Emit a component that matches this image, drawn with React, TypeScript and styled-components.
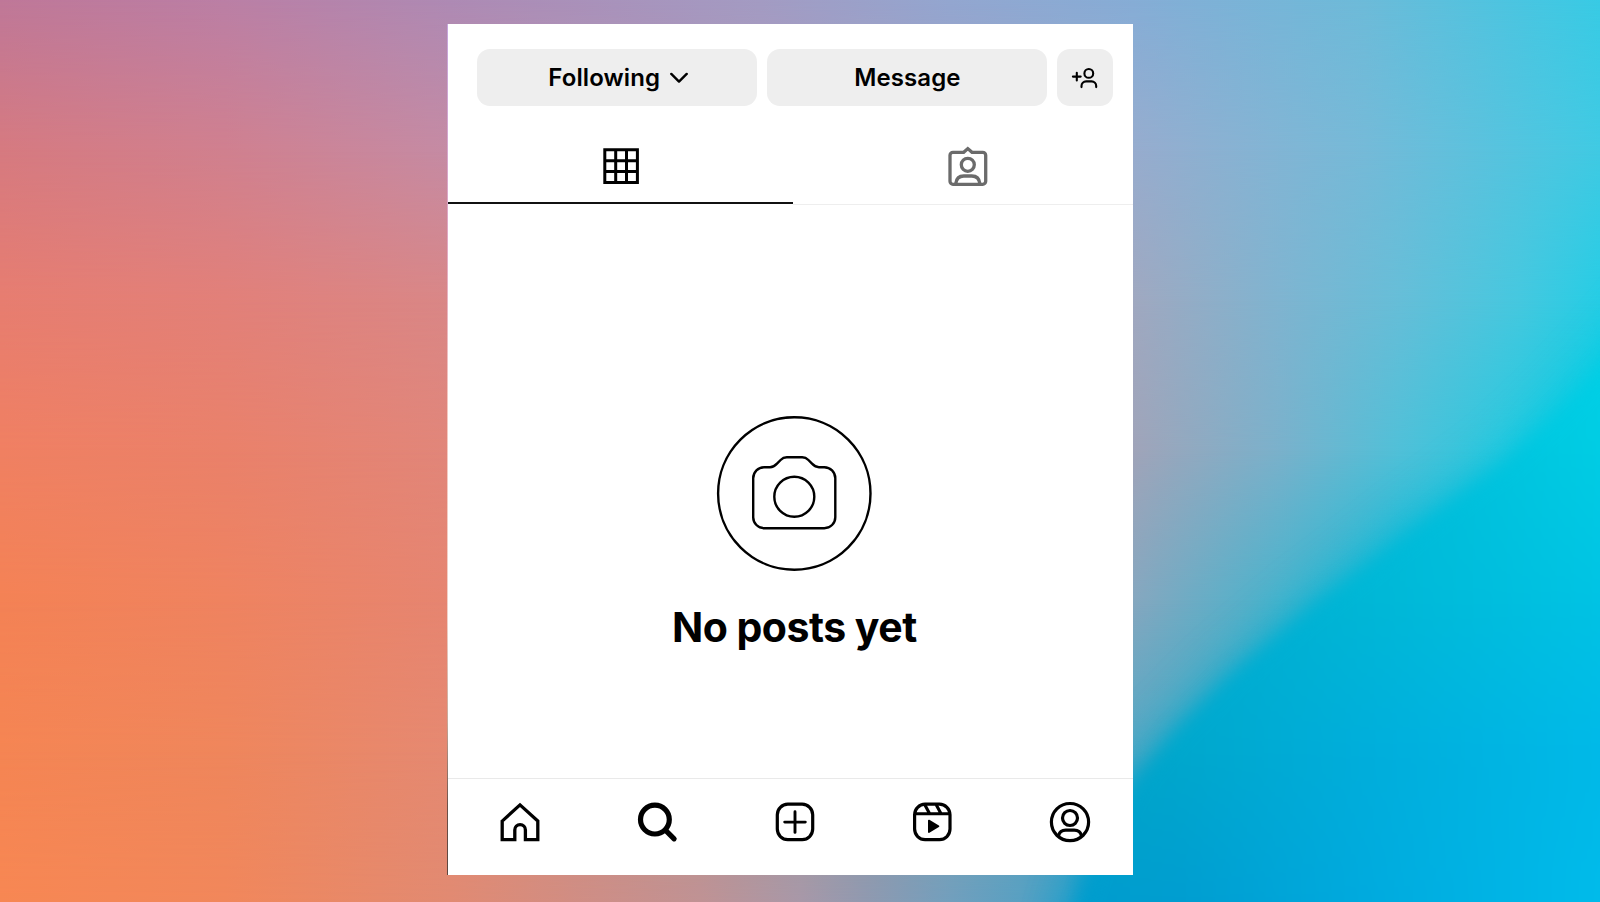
import React from 'react';
import styled, {createGlobalStyle, css} from "styled-components";

type MeshRowType = {
    from: number
    to: number
    colors: string
}

const meshRows: MeshRowType[] = [
    {
        from: 0, to: 0,
        colors: '#bf7898 0, #bb7fa5 225px, #ae8ab4 450px, #a39bc3 760px, #93a6d0 950px, #86add6 1133px, #6dbbd9 1365px, #38cbe5 1600px'
    },
    {
        from: 0, to: 150,
        colors: '#d67a80 0, #d0808f 225px, #c58ba4 450px, #97acce 1133px, #75bad8 1365px, #40cae3 1600px'
    },
    {
        from: 150, to: 300,
        colors: '#e77d70 0, #e28079 225px, #d98787 450px, #a0a8c0 1133px, #7fb4d0 1280px, #66bed8 1400px, #45c8df 1520px, #26cde5 1600px'
    },
    {
        from: 300, to: 450,
        colors: '#f08062 0, #ea816a 225px, #e1867a 450px, #a0a4b9 1133px, #7ab1cb 1280px, #50c0d8 1400px, #2cc8de 1500px, #00cce2 1600px'
    },
    {
        from: 450, to: 600,
        colors: '#f48255 0, #ef8360 225px, #e68571 450px, #86a7bf 1133px, #48b3cc 1280px, #10b9d5 1400px, #00c3e0 1600px'
    },
    {
        from: 600, to: 750,
        colors: '#f58553 0, #ef865c 225px, #e58972 450px, #54a8c4 1133px, #20adc8 1280px, #00bcd5 1600px'
    },
    {
        from: 750, to: 902,
        colors: '#f78753 0, #f1875b 225px, #e18a72 450px, #cd8e87 600px, #c09294 700px, #a898a8 800px, #9099b0 866px, #729fbd 950px, #58a0c2 1020px, #38a0c8 1065px, #009dce 1100px'
    },
]

const waveRows: MeshRowType[] = [
    {from: 0, to: 0, colors: '#00b0cc 1133px, #00bcd8 1365px, #00d0e6 1600px'},
    {from: 300, to: 450, colors: '#00a8cc 1133px, #00b9d6 1365px, #00cde4 1600px'},
    {from: 450, to: 600, colors: '#00a8cc 1133px, #00b7d6 1365px, #00c3e4 1600px'},
    {from: 600, to: 750, colors: '#00a6c9 1133px, #00aedb 1365px, #00b9e8 1600px'},
    {from: 750, to: 902, colors: '#009ccd 1080px, #009dd0 1180px, #00aade 1365px, #00bbea 1600px'},
]

const navIcons = [
    {
        id: 'home',
        icon: <path d="M3.2 20.1 21 3.9l17.8 16.2v18.6H26.4V29a5.3 5.3 0 0 0-10.6 0v9.7H3.2Z" strokeWidth="3.3"/>
    },
    {
        id: 'search',
        icon: <g strokeWidth="5.2"><circle cx="18.9" cy="18.6" r="14.4"/><path d="m29.4 29.1 8.7 8.7"/></g>
    },
    {
        id: 'create',
        icon: <><rect x="3.3" y="3.2" width="35.4" height="35.4" rx="10.5"/><path d="M21 10.8v20.6M10.7 21.1h20.6" strokeWidth="2.9"/></>
    },
    {
        id: 'reels',
        icon: <>
            <rect x="3.6" y="3.2" width="35.4" height="35.4" rx="10.5"/>
            <path d="M3.9 12.7h34.8M13.8 3.8l4.6 8.4M25.2 3.8l4.6 8.4" strokeLinecap="butt" strokeWidth="3.1"/>
            <path d="m17.9 19.6 9.5 5.7-9.5 5.7Z" fill="currentColor" strokeWidth="1.8" strokeLinejoin="round"/>
        </>
    },
    {
        id: 'profile',
        icon: <>
            <circle cx="21" cy="21.1" r="18.6"/>
            <circle cx="21" cy="17" r="7.5"/>
            <path d="M9.6 34.6c.8-3.5 3.6-5.4 7.2-5.4h8.4c3.6 0 6.4 1.9 7.2 5.4"/>
        </>
    },
]

const App = () => {
    return (
        <>
            <GlobalStyle/>
            <Page>
                <Backdrop>
                    {meshRows.map(el => <MeshRow key={el.to} {...el}/>)}
                    <WaveGlow blurSize={24}>
                        <Wave>{waveRows.map(el => <MeshRow key={el.to} {...el}/>)}</Wave>
                    </WaveGlow>
                    <WaveGlow blurSize={9}>
                        <Wave>{waveRows.map(el => <MeshRow key={el.to} {...el}/>)}</Wave>
                    </WaveGlow>
                </Backdrop>
                <Phone>
                    <Edge/>
                    <Card>
                        <Actions>
                            <ActionButton>
                                Following
                                <Chevron viewBox="0 0 18 11">
                                    <path d="m1.3 1.9 7.7 7.7 7.7-7.7"/>
                                </Chevron>
                            </ActionButton>
                            <ActionButton>Message</ActionButton>
                            <ActionButton square aria-label="Suggested users">
                                <Icon size={30} line={2.1} viewBox="0 0 30 30">
                                    <circle cx="18.8" cy="10.4" r="4.4"/>
                                    <path d="M11.5 24.1v-1.1a4.6 4.6 0 0 1 4.6-4.6h5.5a4.6 4.6 0 0 1 4.6 4.6v1.1"/>
                                    <path d="M6.8 9.7v7.8M2.9 13.6h7.8"/>
                                </Icon>
                            </ActionButton>
                        </Actions>
                        <Tabs>
                            <Tab active>
                                <Icon size={42} line={3} viewBox="0 0 42 42" strokeLinejoin="miter">
                                    <path d="M4.8 4.8h32.6v32.6H4.8ZM4.8 15.7h32.6M4.8 26.5h32.6M15.7 4.8v32.6M26.5 4.8v32.6"/>
                                </Icon>
                            </Tab>
                            <Tab>
                                <Icon size={42} line={3.3} viewBox="0 0 42 42">
                                    <path d="M6 6.3h10.7L20.8 2.6l4.2 3.7h10.7a3 3 0 0 1 3 3v26a3 3 0 0 1-3 3H6a3 3 0 0 1-3-3v-26a3 3 0 0 1 3-3Z"/>
                                    <circle cx="20.8" cy="18.8" r="6.5"/>
                                    <path d="M8.8 37.5c.5-4.8 3.6-7.5 8-7.5h8c4.4 0 7.5 2.7 8 7.5"/>
                                </Icon>
                            </Tab>
                        </Tabs>
                        <Empty>
                            <Icon size={155} line={2.4} viewBox="0 0 155 155">
                                <circle cx="77.3" cy="77.5" r="76.2"/>
                                <path d="M47.2 51.2H53c3.2 0 4.8-1.2 7-3.5l3.6-3.7c2-2.1 3.5-2.8 6.2-2.8h15.4c2.7 0 4.2.7 6.2 2.8l3.6 3.7c2.2 2.3 3.8 3.5 7 3.5h5.3a11 11 0 0 1 11 11v39a11 11 0 0 1-11 11h-60.1a11 11 0 0 1-11-11v-39a11 11 0 0 1 11-11Z"/>
                                <circle cx="77.3" cy="80.7" r="20"/>
                            </Icon>
                            <Title>No posts yet</Title>
                        </Empty>
                        <Nav>
                            {navIcons.map(el => (
                                <NavItem key={el.id} aria-label={el.id}>
                                    <Icon size={42} line={3.2} viewBox="0 0 42 42">{el.icon}</Icon>
                                </NavItem>
                            ))}
                        </Nav>
                    </Card>
                </Phone>
            </Page>
        </>
    );
};

export default App;


const GlobalStyle = createGlobalStyle`
  * {
    box-sizing: border-box;
  }

  body {
    margin: 0;
    overflow: hidden;
    font-family: Inter, "Liberation Sans", sans-serif;
  }

  button {
    padding: 0;
    border: none;
    background: none;
    font: inherit;
    color: inherit;
  }
`

const Page = styled.div`
  display: grid;
  grid-template: 902px / 1600px;
  overflow: hidden;

  & > * {
    grid-area: 1 / 1;
  }
`

const Backdrop = styled.div`
  display: grid;
  overflow: hidden;

  & > * {
    grid-area: 1 / 1;
  }
`

// every row fades in over the one above it
const MeshRow = styled.div.withConfig({
    shouldForwardProp: prop => !['from', 'to', 'colors'].includes(prop)
})<MeshRowType>`
  background: linear-gradient(to right, ${props => props.colors});
  ${props => props.to > 0 && css`
    mask-image: linear-gradient(transparent ${props.from}px, #000 ${props.to}px);
  `}
`

const WaveGlow = styled.div.withConfig({
    shouldForwardProp: prop => prop !== 'blurSize'
})<{ blurSize: number }>`
  display: grid;
  margin-right: -100px;
  margin-bottom: -100px;
  filter: blur(${props => props.blurSize}px);
`

const Wave = styled.div`
  display: grid;
  clip-path: polygon(1700px 240px, 1640px 325px, 1600px 370px, 1563px 409px, 1507px 462px, 1430px 518px, 1363px 570px,
  1310px 610px, 1230px 678px, 1173px 736px, 1134px 784px, 1108px 830px, 1082px 902px, 1054px 1002px, 1700px 1002px);

  & > * {
    grid-area: 1 / 1;
  }
`

const Phone = styled.div`
  display: flex;
  z-index: 1;
  width: 686px;
  height: 851px;
  margin: 24px 0 0 447px;
`

const Edge = styled.div`
  width: 1px;
  background: linear-gradient(#c5a5dc, #e0a8c4 25%, #f4c8c0 45%, #f0d0c8 70%, #c8a898 82%, #6b5048 92%, #5c463f);
`

const Card = styled.div`
  display: flex;
  flex-direction: column;
  width: 685px;
  background-color: #fff;
  color: #000;
`

const Actions = styled.div`
  display: flex;
  gap: 9.6px;
  padding: 25.4px 20.2px 0 28.8px;
`

const ActionButton = styled.button.withConfig({
    shouldForwardProp: prop => prop !== 'square'
})<{ square?: boolean }>`
  display: flex;
  flex: ${props => props.square ? '0 0 56.2px' : '1 1 0'};
  align-items: center;
  justify-content: center;
  gap: 9.5px;
  height: 56.4px;
  padding: ${props => props.square ? '0' : '0 0 0 1px'};
  border-radius: 13px;
  background-color: #eee;
  font-size: 24px;
  font-weight: 600;
  letter-spacing: 0.1px;
`

const Chevron = styled.svg`
  width: 18px;
  height: 11px;
  margin-right: -1px;
  fill: none;
  stroke: currentColor;
  stroke-width: 2.4px;
  stroke-linecap: round;
  stroke-linejoin: round;
`

const Icon = styled.svg.withConfig({
    shouldForwardProp: prop => !['size', 'line'].includes(prop)
})<{ size: number, line: number }>`
  width: ${props => props.size}px;
  height: ${props => props.size}px;
  flex-shrink: 0;
  overflow: visible;
  fill: none;
  stroke: currentColor;
  stroke-width: ${props => props.line};
  stroke-linecap: round;
`

const Tabs = styled.div`
  display: grid;
  grid-template-columns: 344.5px 1fr;
  height: 99.2px;
`

const Tab = styled.button.withConfig({
    shouldForwardProp: prop => prop !== 'active'
})<{ active?: boolean }>`
  padding: ${props => props.active ? '39.3px 0 0 1.5px' : '40px 0 0 10.4px'};
  border-bottom: 1px solid #eee;
  color: #6b6b6b;
  display: flex;
  justify-content: center;

  ${props => props.active && css`
    margin-bottom: 0.8px;
    border-bottom: 2px solid #111;
    color: #000;
  `}
`

const Empty = styled.div`
  display: flex;
  flex: 1;
  flex-direction: column;
  align-items: center;
  padding: 211px 0 0 7.6px;
`

const Title = styled.h1`
  margin: 31px 0 0;
  font-size: 41px;
  font-weight: 700;
  line-height: 50px;
  letter-spacing: -0.5px;
  white-space: nowrap;
`

const Nav = styled.div`
  display: grid;
  grid-template-columns: repeat(5, 137.5px);
  height: 97px;
  padding: 22px 0 0 3.2px;
  border-top: 1px solid #e9e9e9;
  overflow: hidden;
`

const NavItem = styled.button`
  display: flex;
  justify-content: center;
`
